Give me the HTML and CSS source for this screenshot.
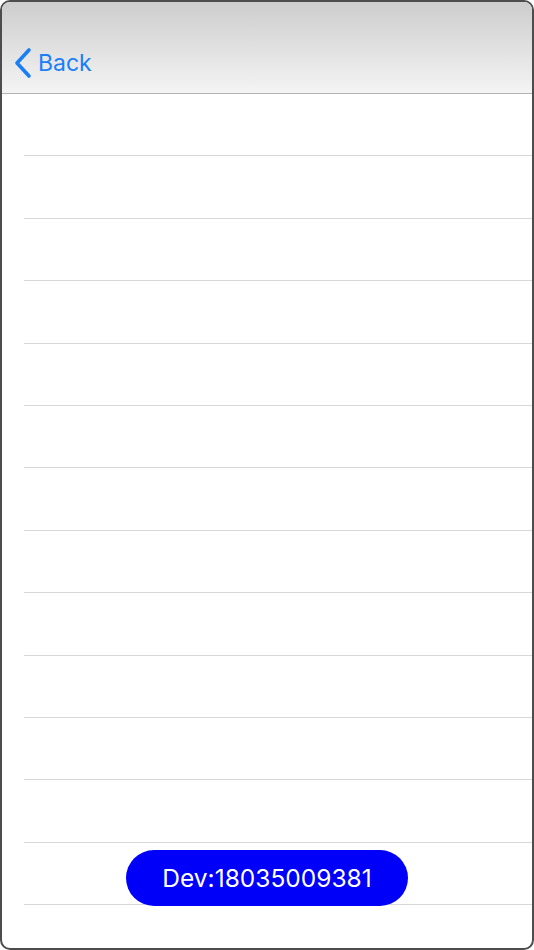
FILE: index.html
```html
<!DOCTYPE html>
<html>
<head>
<meta charset="utf-8">
<link rel="stylesheet" href="styles.css">
</head>
<body>
<div class="frame">
  <div class="navbar">
    <a class="back">
      <svg class="chev" width="18" height="32" viewBox="0 0 18 32"><path d="M15 3 L3 16 L15 29" fill="none" stroke="#1a7ef7" stroke-width="3.6" stroke-linecap="round" stroke-linejoin="round"/></svg>
      <span class="back-label">Back</span>
    </a>
  </div>
  <div class="list">
    <div class="row"></div><div class="row"></div><div class="row"></div><div class="row"></div>
    <div class="row"></div><div class="row"></div><div class="row"></div><div class="row"></div>
    <div class="row"></div><div class="row"></div><div class="row"></div><div class="row"></div>
    <div class="row"></div>
  </div>
  <div class="pill">Dev:18035009381</div>
</div>
</body>
</html>
```
FILE: styles.css
```css
html, body { margin: 0; padding: 0; background: #fff; }
.frame {
  position: relative;
  width: 534px;
  height: 950px;
  box-sizing: border-box;
  border: 2px solid #4d4d4d;
  border-radius: 10px;
  overflow: hidden;
  background: #fff;
  font-family: Inter, "Noto Sans", sans-serif;
}
.navbar {
  box-sizing: border-box;
  height: 92px;
  border-bottom: 1px solid #b3b3b3;
  background: linear-gradient(#cdcdcd, #f4f4f4);
  display: flex;
  align-items: flex-end;
  padding-left: 12px;
  padding-bottom: 14px;
}
.back {
  display: flex;
  align-items: center;
  gap: 6px;
  color: #1a7ef7;
}
.chev { display: block; }
.back-label { font-size: 23px; line-height: 32px; }
.list { margin-left: 22px; }
.row {
  height: 62.42px;
  box-sizing: border-box;
  border-bottom: 1px solid #d8d8d8;
}
.pill {
  position: absolute;
  left: 124px;
  top: 848px;
  width: 282px;
  height: 56px;
  border-radius: 28px;
  background: #0000fa;
  color: #fff;
  font-size: 24.5px;
  display: flex;
  align-items: center;
  justify-content: center;
}
```
